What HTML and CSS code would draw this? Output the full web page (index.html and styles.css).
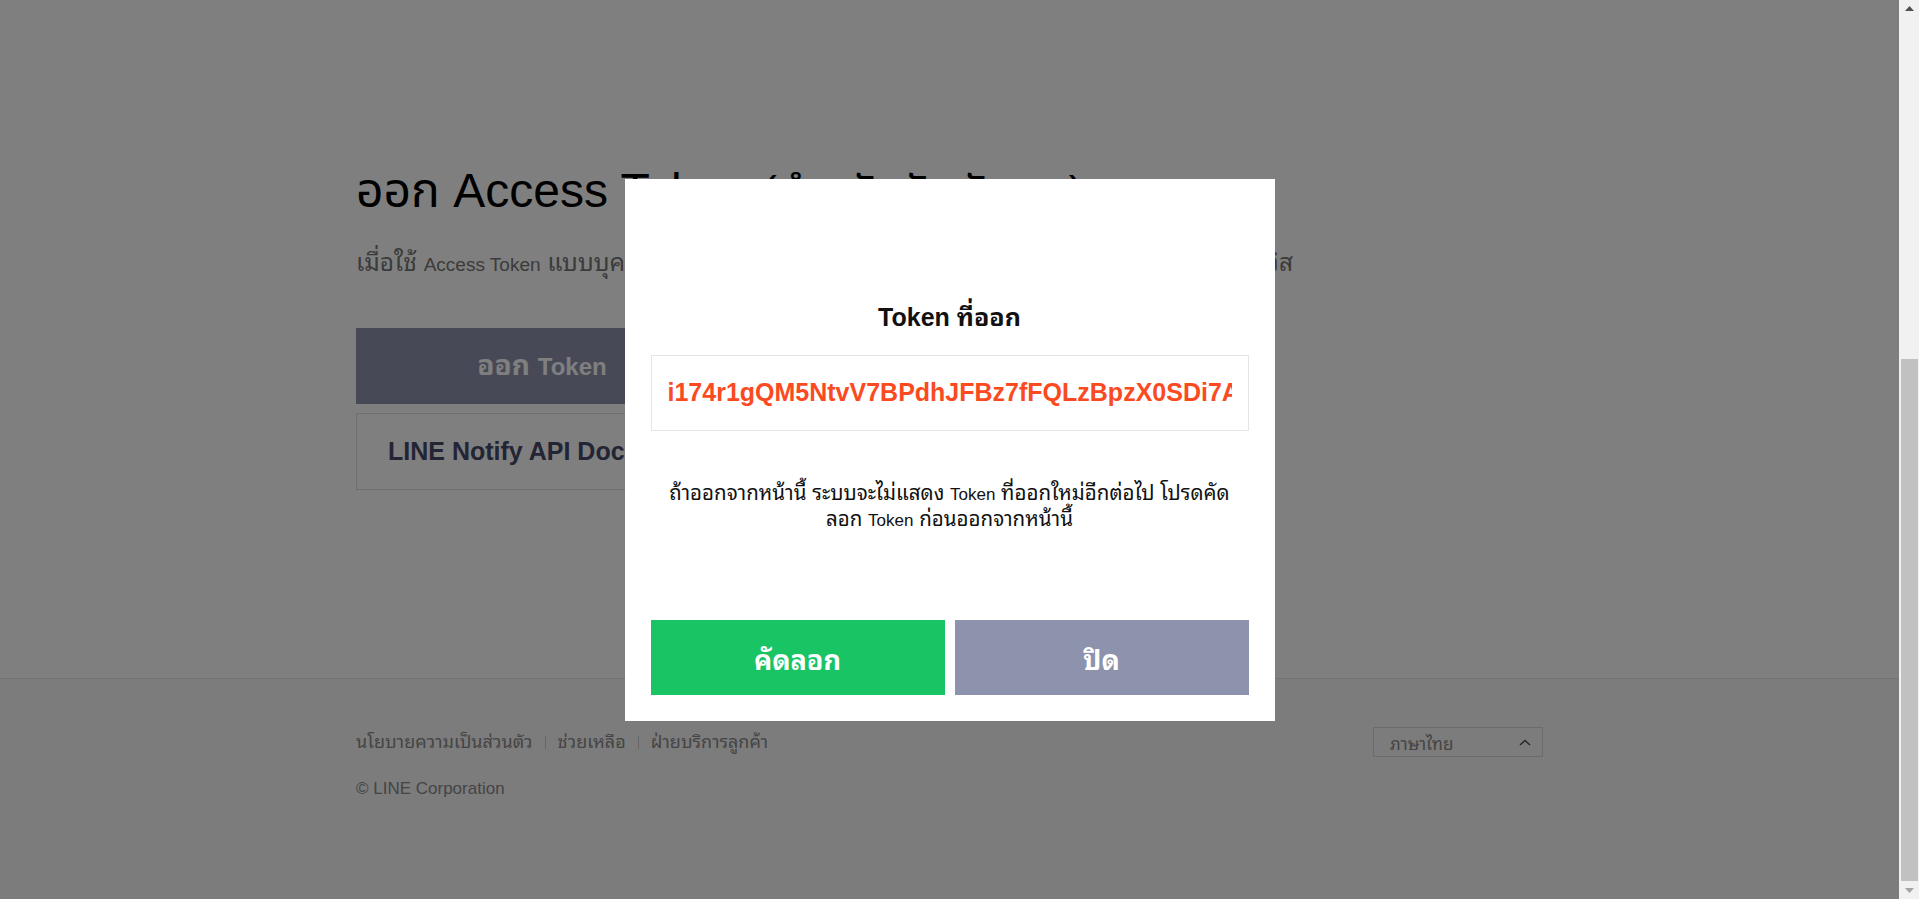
FILE: index.html
```html
<!DOCTYPE html>
<html lang="th">
<head>
<meta charset="utf-8">
<title>LINE Notify</title>
<link rel="stylesheet" href="styles.css">
</head>
<body>
<div class="screen">
  <div class="page">
    <main class="main">
      <div class="container">
        <h1 class="title">ออก Access Token <span class="title-th">(สำหรับนักพัฒนา)</span></h1>
        <p class="lead">เมื่อใช้ <span class="en">Access Token</span> แบบบุคคล จะสามารถตั้งค่าการแจ้งเตือนได้โดยไม่ต้องลงทะเบียนเว็บเซอร์วิส</p>
        <div class="actions">
          <div class="btn-issue">ออก <span class="en">Token</span></div>
          <div class="doc-link">LINE Notify API Document</div>
        </div>
      </div>
    </main>
    <footer class="footer">
      <div class="container">
        <div class="footer-row">
          <nav class="links">
            <span>นโยบายความเป็นส่วนตัว</span>
            <span class="sep"></span>
            <span>ช่วยเหลือ</span>
            <span class="sep"></span>
            <span>ฝ่ายบริการลูกค้า</span>
          </nav>
          <div class="lang">
            <span>ภาษาไทย</span>
            <svg class="chev" width="12" height="7" viewBox="0 0 12 7"><polyline points="1,6 6,1.5 11,6" fill="none" stroke="#555" stroke-width="1.6"/></svg>
          </div>
        </div>
        <p class="copyright">© LINE Corporation</p>
      </div>
    </footer>
  </div>
  <div class="scrollbar">
    <div class="sb-btn"><svg width="9" height="5" viewBox="0 0 9 5"><polygon points="0,5 4.5,0 9,5" fill="#505050"/></svg></div>
    <div class="sb-track"><div class="sb-thumb"></div></div>
    <div class="sb-btn"><svg width="9" height="5" viewBox="0 0 9 5"><polygon points="0,0 9,0 4.5,5" fill="#a3a3a3"/></svg></div>
  </div>
</div>
<div class="overlay">
  <div class="modal">
    <h2 class="modal-title">Token ที่ออก</h2>
    <div class="token-box"><div class="token-text">i174r1gQM5NtvV7BPdhJFBz7fFQLzBpzX0SDi7AqK3mWxRt9</div></div>
    <p class="modal-desc">ถ้าออกจากหน้านี้ ระบบจะไม่แสดง <span class="en">Token</span> ที่ออกใหม่อีกต่อไป โปรดคัด<br>ลอก <span class="en">Token</span> ก่อนออกจากหน้านี้</p>
    <div class="modal-buttons">
      <div class="mbtn mbtn-copy">คัดลอก</div>
      <div class="mbtn mbtn-close">ปิด</div>
    </div>
  </div>
</div>
</body>
</html>
```
FILE: styles.css
```css
html, body {
  margin: 0;
  padding: 0;
}
body {
  font-family: "Liberation Sans", "Noto Sans Thai Looped", "Noto Sans Thai", sans-serif;
  background: #fff;
}
.screen {
  display: flex;
  height: 899px;
  overflow: hidden;
}
.page {
  flex: 1;
  min-width: 0;
  display: flex;
  flex-direction: column;
  background: #fff;
}
.main {
  height: 678px;
  box-sizing: border-box;
  padding-top: 163px;
  flex-shrink: 0;
}
.container {
  width: 1187px;
  margin: 0 auto;
}
.title {
  margin: 0;
  height: 56px;
  font-family: "Liberation Sans", "Noto Sans Thai", sans-serif;
  font-size: 48px;
  line-height: 56px;
  font-weight: normal;
  color: #000;
  white-space: nowrap;
}
.title-th {
  font-size: 45px;
}
.lead {
  margin: 30px 0 0;
  height: 28px;
  font-size: 24.5px;
  line-height: 28px;
  color: #777;
  white-space: nowrap;
}
.lead .en {
  font-size: 19px;
  line-height: 1;
}
.actions {
  margin-top: 51px;
  display: flex;
  flex-direction: column;
  gap: 9px;
}
.btn-issue {
  width: 372px;
  height: 76px;
  background: #8e92ae;
  color: #fff;
  font-size: 28px;
  line-height: 76px;
  font-weight: bold;
  text-align: center;
  white-space: nowrap;
}
.btn-issue .en {
  font-size: 24px;
  line-height: 1;
}
.doc-link {
  width: 372px;
  height: 77px;
  box-sizing: border-box;
  border: 1px solid #dcdcdc;
  padding-left: 31px;
  display: flex;
  align-items: center;
  font-size: 25px;
  font-weight: bold;
  color: #464a68;
  white-space: nowrap;
  overflow: hidden;
}
.footer {
  flex: 1;
  border-top: 1px solid #e4e4e4;
  background: #f8f8f8;
  padding-top: 48px;
}
.footer-row {
  display: flex;
  justify-content: space-between;
  align-items: center;
  height: 30px;
}
.links {
  display: flex;
  align-items: center;
  font-size: 18px;
  line-height: 24px;
  color: #8a8a8a;
}
.sep {
  width: 1px;
  height: 13px;
  background: #cfcfcf;
  margin: 0 12px;
}
.lang {
  width: 170px;
  height: 30px;
  box-sizing: border-box;
  border: 1px solid #d9d9d9;
  background: #f8f8f8;
  display: flex;
  align-items: center;
  justify-content: space-between;
  padding: 0 11px 0 16px;
  font-size: 17px;
  color: #888;
}
.copyright {
  margin: 22px 0 0;
  font-size: 17px;
  line-height: 20px;
  color: #8a8a8a;
}
.scrollbar {
  width: 20px;
  flex-shrink: 0;
  background: #f1f1f1;
  display: flex;
  flex-direction: column;
}
.sb-btn {
  height: 17px;
  display: flex;
  align-items: center;
  justify-content: center;
  flex-shrink: 0;
}
.sb-btn svg {
  display: block;
}
.sb-track {
  flex: 1;
  box-sizing: border-box;
  padding: 342px 1px 1px 2px;
}
.sb-thumb {
  height: 100%;
  background: #c1c1c1;
}
.overlay {
  position: fixed;
  top: 0;
  left: 0;
  bottom: 0;
  right: 20px;
  background: rgba(0, 0, 0, 0.5);
  display: flex;
  align-items: center;
  justify-content: center;
}
.modal {
  width: 650px;
  height: 542px;
  box-sizing: border-box;
  padding: 26px;
  background: #fff;
  display: flex;
  flex-direction: column;
}
.modal-title {
  margin: 97px 0 0;
  height: 30px;
  font-size: 25px;
  line-height: 30px;
  font-weight: bold;
  text-align: center;
  color: #111;
}
.token-box {
  margin-top: 23px;
  height: 76px;
  box-sizing: border-box;
  border: 1px solid #e5e5e5;
  padding: 0 16px;
  display: flex;
  align-items: center;
}
.token-text {
  flex: 1;
  overflow: hidden;
  white-space: nowrap;
  font-size: 25px;
  font-weight: bold;
  color: #fb4a1f;
}
.modal-desc {
  margin: 49px 0 0;
  font-size: 20.5px;
  line-height: 26px;
  text-align: center;
  color: #111;
}
.modal-desc .en {
  font-size: 17px;
  line-height: 1;
}
.modal-buttons {
  margin-top: auto;
  display: flex;
  gap: 10px;
}
.mbtn {
  flex: 1;
  height: 75px;
  display: flex;
  align-items: center;
  justify-content: center;
  color: #fff;
  font-size: 27px;
  font-weight: bold;
}
.mbtn-copy {
  background: #19c464;
}
.mbtn-close {
  background: #8d92ad;
}
```
